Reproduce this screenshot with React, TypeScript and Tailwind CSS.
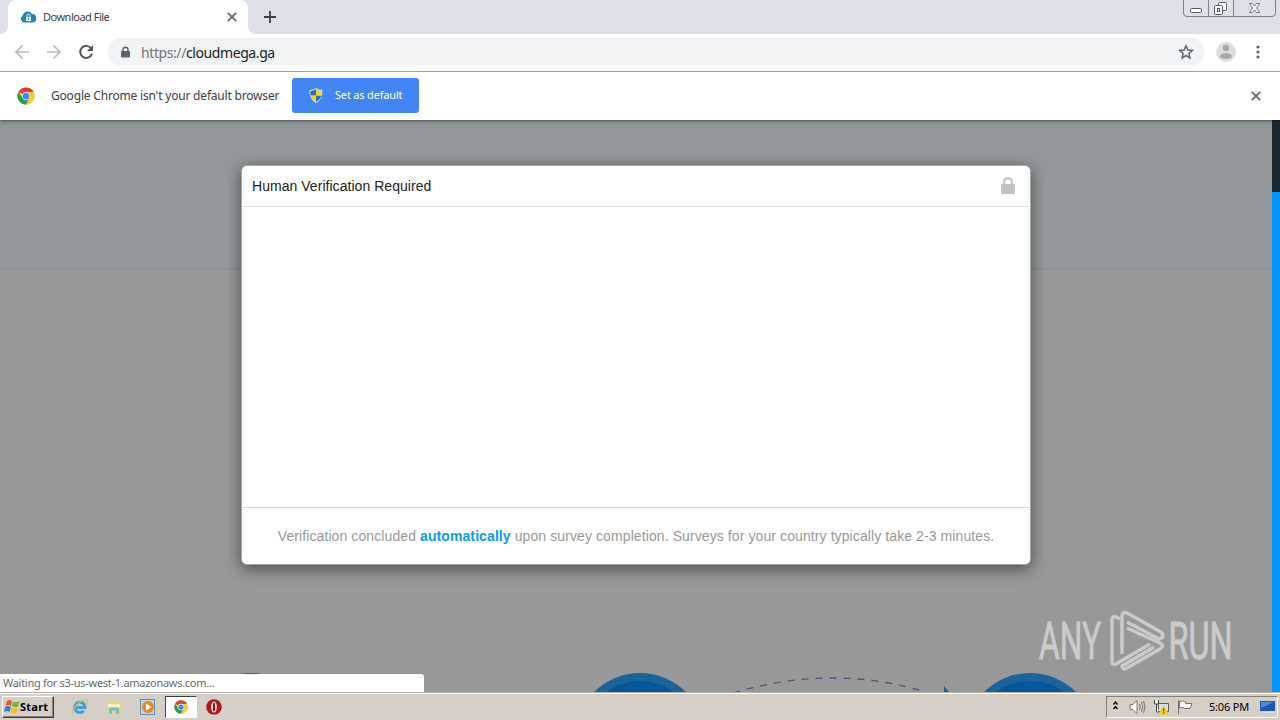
import type { ReactNode } from "react";

function ChromeLogo({ className }: { className?: string }) {
  return (
    <svg viewBox="0 0 48 48" className={className}>
      <circle cx="24" cy="24" r="23" fill="#f8c840" />
      <path d="M24 24 L4.1 12.5 A23 23 0 0 1 43.9 12.5 Z" fill="#dc3f34" />
      <path d="M4.1 12.5 A23 23 0 0 0 24 47 L33.5 29.5 L24 24 L14.5 29.5 Z" fill="#2b9a55" />
      <path d="M24 13.5 H44.4 A23 23 0 0 1 24 47 L33.5 29.5 Z" fill="#f8c840" />
      <circle cx="24" cy="24" r="11" fill="#e9eff8" />
      <circle cx="24" cy="24" r="9" fill="#4285f4" />
    </svg>
  );
}

function LockIcon({ className }: { className?: string }) {
  return (
    <svg viewBox="0 0 14 17" className={className} fill="currentColor">
      <path d="M0 8.2 Q0 7 1.2 7 H2 V5 A5 5 0 0 1 12 5 V7 H12.8 Q14 7 14 8.2 V15.8 Q14 17 12.8 17 H1.2 Q0 17 0 15.8 Z M4.3 7 H9.7 V5 A2.7 2.7 0 0 0 4.3 5 Z" />
    </svg>
  );
}

function CloseIcon({ className }: { className?: string }) {
  return (
    <svg viewBox="0 0 10 10" className={className} stroke="currentColor" strokeWidth="1.7">
      <path d="M.8 .8 L9.2 9.2 M9.2 .8 L.8 9.2" />
    </svg>
  );
}

function TabStrip() {
  return (
    <div className="relative flex h-[34px] shrink-0 bg-[#dee1e8]">
      <div className="w-2 bg-white">
        <div className="h-full rounded-br-lg bg-[#dee1e8]" />
      </div>
      <div className="flex w-60 items-center rounded-t-lg bg-white pl-3 pr-[11px]">
        <svg viewBox="0 0 16 12" className="h-3 w-4">
          <path d="M4 11.5 A3.8 3.8 0 0 1 2.8 4.5 A5 5 0 0 1 12 3 A4.3 4.3 0 0 1 13 11.5 Z" fill="#2385b5" />
          <rect x="6" y="6" width="5" height="4" fill="#e8f5fb" />
          <path d="M7 6 V4.5 A1.5 1.5 0 0 1 10 4.5 V6" fill="none" stroke="#e8f5fb" />
          <path d="M8.5 7 V9" stroke="#2385b5" />
        </svg>
        <span className="ml-[7px] flex-1 whitespace-nowrap text-[11px] tracking-[-0.5px] text-[#3c4043]">Download File</span>
        <CloseIcon className="size-[10px] text-[#5f6368]" />
      </div>
      <div className="w-2 bg-white">
        <div className="h-full rounded-bl-lg bg-[#dee1e8]" />
      </div>
      <svg viewBox="0 0 12 12" className="ml-2 mt-[11px] size-3" stroke="#3c4043" strokeWidth="1.8">
        <path d="M6 0 V12 M0 6 H12" />
      </svg>
      <svg viewBox="0 0 94 18" className="absolute right-[3px] top-0 h-[18px] w-[94px]" fill="none" stroke="#7b8089">
        <path d="M.5 0 V13 Q.5 16.5 4 16.5 H89 Q92.5 16.5 92.5 13 V0 M25.5 0 V16 M50.5 0 V16" />
        <g stroke="#55585f" fill="#fff">
          <rect x="7.5" y="8.5" width="11" height="4" rx="1" />
          <rect x="35.5" y="2.5" width="8" height="8" rx="1" />
          <rect x="31.5" y="5.5" width="8" height="9" rx="1" />
          <rect x="34.5" y="8.5" width="2" height="3" />
          <path d="M66.5 3.5 H69.5 L71.5 6 L73.5 3.5 H76.500 L73.5 8 L76.5 12.5 H73.5 L71.5 10 L69.5 12.5 H66.5 L69.5 8 Z" strokeWidth=".8" />
        </g>
      </svg>
    </div>
  );
}

function Toolbar() {
  return (
    <div className="flex h-[38px] shrink-0 items-center border-b border-[#b2b5b9] bg-white pb-px pl-[14px]">
      <svg viewBox="0 0 16 16" className="size-4" fill="none" stroke="#b9bbbe" strokeWidth="1.7">
        <path d="M15 8 H2 M8.5 1.5 L2 8 L8.5 14.5" />
      </svg>
      <svg viewBox="0 0 16 16" className="ml-4 size-4" fill="none" stroke="#b9bbbe" strokeWidth="1.7">
        <path d="M1 8 H14 M7.5 1.5 L14 8 L7.5 14.5" />
      </svg>
      <svg viewBox="0 0 16 16" className="ml-4 size-4" fill="none" stroke="#53565b" strokeWidth="2">
        <path d="M13.2 4.5 A6 6 0 1 0 14 9.5" />
        <path d="M15 1 V7 H9 Z" fill="#53565b" stroke="none" />
      </svg>
      <div className="ml-[14px] flex h-7 w-[1096px] items-center rounded-full bg-[#f1f3f4] pl-[13px] pr-[10px]">
        <LockIcon className="h-3 w-[9px] text-[#5f6368]" />
        <span className="ml-[11px] flex-1 whitespace-nowrap text-[14px] tracking-[-0.41px] text-[#202124]">
          <span className="text-[#70757a]">https://</span>cloudmega.ga
        </span>
        <svg viewBox="0 0 16 16" className="size-4" fill="none" stroke="#5f6368" strokeWidth="1.5">
          <path d="M8 1.800 L9.800 6 L14.300 6.400 L10.900 9.400 L11.900 13.900 L8 11.500 L4.100 13.900 L5.100 9.400 L1.700 6.400 L6.200 6 Z" />
        </svg>
      </div>
      <svg viewBox="0 0 20 20" className="ml-3 size-5">
        <circle cx="10" cy="10" r="10" fill="#dedede" />
        <circle cx="10" cy="6" r="3.2" fill="#a9a9a9" />
        <ellipse cx="10" cy="14" rx="6" ry="3" fill="#a9a9a9" />
      </svg>
      <svg viewBox="0 0 4 14" className="ml-5 h-[14px] w-1" fill="#5f6368">
        <circle cx="2" cy="2" r="1.6" />
        <circle cx="2" cy="7" r="1.6" />
        <circle cx="2" cy="12" r="1.6" />
      </svg>
    </div>
  );
}

function DefaultBrowserBar() {
  return (
    <div className="relative z-10 flex h-12 shrink-0 items-center bg-white pb-px pl-[17px] pr-[19px] shadow-[0_1px_3px_rgba(0,0,0,0.5)]">
      <ChromeLogo className="size-[18px]" />
      <span className="ml-4 w-[241px] whitespace-nowrap text-[12px] tracking-[-0.19px] text-[#3c4043]">
        Google Chrome isn't your default browser
      </span>
      <button className="flex h-[35px] w-[127px] items-center rounded-[3px] bg-[#4285f4] pl-[17px] text-white">
        <svg viewBox="0 0 14 15" className="h-[15px] w-[14px]">
          <path d="M7 0 Q10 2 13.500 2 Q14 11 7 15 Q0 11 .5 2 Q4 2 7 0 Z" fill="#d9dfd0" />
          <path d="M7 1.300 V7.500 H1.500 V3 Q5 3 7 1.300 Z M7 7.500 H12.300 Q11.500 11.500 7 13.700 Z" fill="#2a6cb5" />
          <path d="M7 1.300 Q9 3 12.500 3 V7.500 H7 Z M7 7.500 V13.700 Q2.500 11.500 1.700 7.500 Z" fill="#f6cf2c" />
        </svg>
        <span className="ml-3 whitespace-nowrap text-[11px] tracking-[-0.18px]">Set as default</span>
      </button>
      <CloseIcon className="ml-auto mt-px size-[10px] text-[#5f6368]" />
    </div>
  );
}

function VerificationModal() {
  return (
    <div className="absolute left-[241px] top-[45px] flex h-[400px] w-[790px] flex-col rounded-[6px] border border-[#a5a7a8] bg-white font-['Liberation_Sans'] shadow-[0_4px_16px_rgba(0,0,0,0.5)]">
      <div className="flex h-[41px] items-center justify-between border-b border-[#e2e2e2] pl-[10px] pr-[15px]">
        <h1 className="whitespace-nowrap text-[14px] tracking-[0.04px] text-[#222]">Human Verification Required</h1>
        <LockIcon className="mb-px h-[17px] w-[14px] text-[#c3c3c3]" />
      </div>
      <div className="flex-1" />
      <p className="flex h-[57px] items-center justify-center whitespace-pre border-t border-[#dcdcdc] text-[14px] tracking-[0.095px] text-[#999]">
        Verification concluded <b className="text-[#0c9be8]">automatically</b> upon survey completion. Surveys for your country typically take 2-3 minutes.
      </p>
    </div>
  );
}

function Watermark() {
  return (
    <svg viewBox="0 0 200 70" className="absolute left-[1036px] top-[486px] h-[70px] w-[200px]" fill="#cbcbcb">
      <g fontFamily="Roboto" fontSize="51" fontWeight="400" stroke="#cbcbcb" strokeWidth=".8">
        <text x="3" y="53" textLength="117" lengthAdjust="spacingAndGlyphs" transform="translate(1.4 0) scale(.53 1)">ANY</text>
        <text x="0" y="53" textLength="121" lengthAdjust="spacingAndGlyphs" transform="translate(132.5 0) scale(.53 1)">RUN</text>
      </g>
      <g fill="none" stroke="#cbcbcb" strokeWidth="3.4" strokeLinejoin="round">
        <path d="M84 13 L80 11 Q76 9 76 14 V55 Q76 60 80 58 L114 38" />
        <path d="M86 48 V11 Q86 5 91 7 L125 26 Q128 29 126 32 L123 33 L91 16" />
        <path d="M91 22 L124 37 Q129 40 124 43 L91 62 Q87 65 86 60 L118 41" />
      </g>
    </svg>
  );
}

function PageContent() {
  return (
    <main className="relative min-h-0 flex-1 overflow-hidden bg-[#989898] font-['Liberation_Sans']">
      <div className="h-[150px] border-b-2 border-[#8b9599] bg-[#929799]" />
      <div className="absolute right-0 top-0 flex h-full w-2 flex-col bg-[#0095ff]">
        <div className="h-[72px] bg-[#1d2733]" />
      </div>
      <svg viewBox="0 0 1280 40" className="absolute bottom-0 left-0 h-10 w-full">
        {[250, 640, 1030].map((cx) => (
          <g key={cx}>
            <circle cx={cx} cy="86" r="65" fill="#1b6398" />
            <circle cx={cx} cy="86" r="57" fill="#00579b" />
          </g>
        ))}
        <path d="M733 41 Q830 12 922 39" fill="none" stroke="#405b7c" strokeWidth="1.3" strokeDasharray="7 7" />
        <path d="M944 34 L949 40 H944 Z" fill="#205e92" />
      </svg>
      <VerificationModal />
      <Watermark />
      <div className="absolute bottom-0 left-0 flex h-[18px] w-[424px] items-center whitespace-nowrap rounded-tr-[3px] bg-white pl-[3px] font-['Noto_Sans'] text-[11px] tracking-[-0.29px] text-[#6a6a6a]">
        Waiting for s3-us-west-1.amazonaws.com...
      </div>
    </main>
  );
}

function TaskItem({ children, active }: { children: ReactNode; active?: boolean }) {
  return (
    <div
      className={
        active
          ? "flex h-[22px] w-8 items-center justify-center border border-b-white border-l-[#404040] border-r-white border-t-[#404040] bg-white"
          : "flex h-[22px] w-[34px] items-center justify-center"
      }
    >
      {children}
    </div>
  );
}

function Taskbar() {
  return (
    <footer className="flex h-7 shrink-0 items-start border-t border-[#b5b2ad] bg-[#d5cfc7] shadow-[inset_0_1px_0_#fff]">
      <button className="ml-[2px] mt-[3px] flex h-[22px] w-[52px] items-center border border-b-[#404040] border-l-white border-r-[#404040] border-t-white pl-px shadow-[inset_-1px_-1px_0_#858078]">
        <svg viewBox="0 0 16 16" className="size-4 shrink-0">
          <path d="M3 2 Q6 0 8 2 L7 7 Q4 5 1.5 7 Z" fill="#e8592b" />
          <path d="M9 2.5 Q12 4 15.5 2 L14 7.5 Q11 9 8 7 Z" fill="#76b53c" />
          <path d="M1.2 8 Q4 6 6.8 8 L5.5 13 Q3 11 0 13 Z" fill="#347dc5" />
          <path d="M7.7 8.5 Q11 10 13.7 8.5 L12.5 14 Q9 15.5 6.5 13.5 Z" fill="#f5bd28" />
        </svg>
        <span className="text-[11px] font-bold tracking-[0.25px] text-black">Start</span>
      </button>
      <div className="ml-[9px] mt-[3px] flex">
        <TaskItem>
          <svg viewBox="0 0 18 18" className="size-[18px]" fill="none">
            <path d="M4 9.500 H14 A5.200 5.200 0 1 0 12.700 12.800" stroke="#3ba1dc" strokeWidth="3" />
            <path d="M2 15.500 C-1 12 11 0 16 2 Q17.500 3 15.500 6" stroke="#e7b94b" strokeWidth="1.300" />
          </svg>
        </TaskItem>
        <TaskItem>
          <svg viewBox="0 0 16 16" className="size-4">
            <path d="M1 3 H6 L7 2 H13 V5 H15 V14 H1 Z" fill="#ead46f" />
            <path d="M2 5 H14 V8 H2 Z" fill="#fff5bd" />
            <path d="M3 15 V10 Q3 8.500 5 8.500 H11 Q13 8.500 13 10 V15 H10 V11.500 H6 V15 Z" fill="#77bddd" />
          </svg>
        </TaskItem>
        <TaskItem>
          <svg viewBox="0 0 16 16" className="size-4">
            <rect x=".5" y=".5" width="14" height="15" fill="#b9d7ed" stroke="#5c91bb" />
            <circle cx="8" cy="8" r="6" fill="#f08819" />
            <path d="M6 4.500 L11.500 8 L6 11.500 Z" fill="#fff" />
          </svg>
        </TaskItem>
        <TaskItem active>
          <ChromeLogo className="size-[14px]" />
        </TaskItem>
        <TaskItem>
          <svg viewBox="0 0 16 16" className="size-4">
            <circle cx="8" cy="8" r="7.8" fill="#b01818" />
            <ellipse cx="8" cy="8" rx="2.8" ry="5.5" fill="#fff" />
            <ellipse cx="8" cy="8" rx="1.2" ry="4.5" fill="#911010" />
          </svg>
        </TaskItem>
      </div>
      <div className="ml-auto mr-[2px] mt-[3px] flex h-[22px] w-[172px] items-center border border-b-white border-l-[#858078] border-r-white border-t-[#858078] text-black">
        <svg viewBox="0 0 5 9" className="mb-[3px] ml-[6px] h-[9px] w-[5px]" fill="none" stroke="#000" strokeWidth="1.4">
          <path d="M.5 3.500 L2.500 1 L4.500 3.500 M.5 8 L2.500 5.500 L4.500 8" />
        </svg>
        <svg viewBox="0 0 17 16" className="ml-[11px] h-4 w-[17px]" fill="none" stroke="#77736e">
          <path d="M1 5.500 H4 L8 1.500 V14.500 L4 10.500 H1 Z" fill="#fff" />
          <path d="M10.500 5 Q12 8 10.500 11 M12.500 3 Q15 8 12.500 13 M14.500 2 Q17.500 8 14.500 14" />
        </svg>
        <svg viewBox="0 0 16 16" className="ml-[7px] size-4">
          <path d="M5.500 4.500 H15.500 V12.500 H5.500 Z" fill="#d5e1ea" stroke="#5d5b58" />
          <path d="M1.500 1 V5 H5.500 V1 M3.500 5 V13 H6" fill="#fff" stroke="#44423f" />
          <path d="M10.500 6 L16 15.500 H5.500 Z" fill="#f5ce16" />
          <path d="M10.700 9 V12.500 M10.700 13.300 V14.500" stroke="#433b00" />
        </svg>
        <svg viewBox="0 0 16 16" className="ml-2 size-4" fill="#fff" stroke="#77736e">
          <path d="M1.500 1 V15.500 M2.500 2.500 Q6 1 8.500 3 V4.500 H15 L13 9.500 H8 Q5 7.500 2.500 9 Z" />
        </svg>
        <span className="ml-4 w-[51px] whitespace-nowrap text-[11px] tracking-[-0.2px]">5:06 PM</span>
        <svg viewBox="0 0 16 14" className="h-[14px] w-4">
          <rect y="1" width="15" height="10" fill="#1c56b1" />
          <path d="M1 2 H14 L1 8 Z" fill="#4d8de0" />
          <path d="M3 12 H13 V13 H3 Z" fill="#dce8f2" />
        </svg>
      </div>
    </footer>
  );
}

export default function App() {
  return (
    <div className="flex h-[720px] w-[1280px] flex-col overflow-hidden bg-white font-['Noto_Sans',sans-serif]">
      <TabStrip />
      <Toolbar />
      <DefaultBrowserBar />
      <PageContent />
      <Taskbar />
    </div>
  );
}
